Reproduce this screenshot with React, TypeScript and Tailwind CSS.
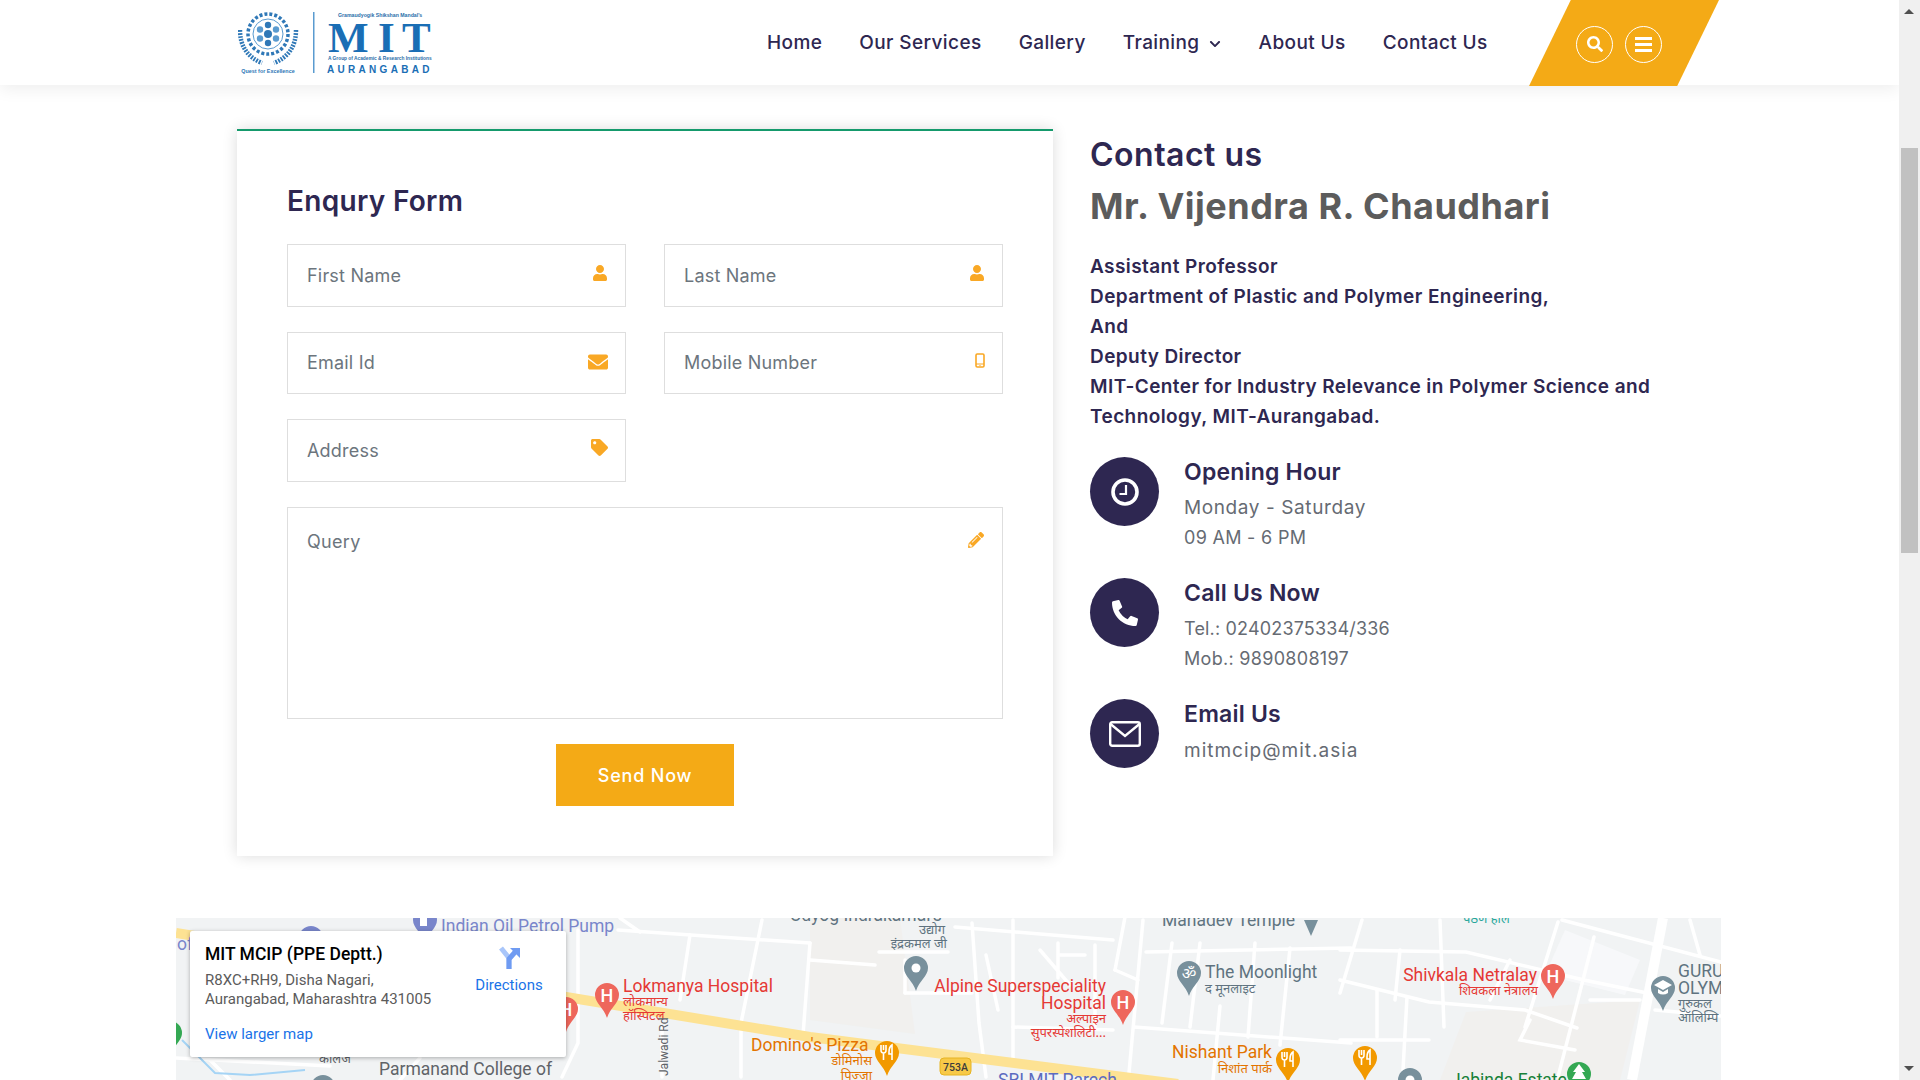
import React from "react";
import { FaUser, FaEnvelope, FaTag, FaPencilAlt, FaSearch, FaChevronDown, FaPhoneAlt } from "react-icons/fa";

function Logo() {
  return (
    <svg width="200" height="85" viewBox="238 0 200 85" className="shrink-0">
      <g transform="translate(268,34)">
        <circle r="20" fill="none" stroke="#2f78b7" strokeWidth="3.500" strokeDasharray="3 2" />
        <circle r="15" fill="none" stroke="#5a9bd0" strokeWidth="1" />
        <circle r="4" fill="#2f78b7" />
        <circle cx="0" cy="-9" r="3.200" fill="#2f78b7" />
        <circle cx="0" cy="9" r="3.200" fill="#2f78b7" />
        <circle cx="-8" cy="-4.500" r="3.200" fill="#5a9bd0" />
        <circle cx="8" cy="-4.500" r="3.200" fill="#5a9bd0" />
        <circle cx="-8" cy="4.500" r="3.200" fill="#5a9bd0" />
        <circle cx="8" cy="4.500" r="3.200" fill="#5a9bd0" />
        <path d="M-28 -4 Q-28 20 -6 29" fill="none" stroke="#2f78b7" strokeWidth="4.500" strokeDasharray="1.800 1.200" />
        <path d="M28 -4 Q28 20 6 29" fill="none" stroke="#2f78b7" strokeWidth="4.500" strokeDasharray="1.800 1.200" />
      </g>
      <text x="268" y="73" textAnchor="middle" fontSize="5.400" fontWeight="700" fill="#2f78b7" fontFamily="Liberation Sans, sans-serif">Quest for Excellence</text>
      <rect x="313" y="12" width="1.500" height="61" fill="#5a9bd0" />
      <text x="338" y="16.500" fontSize="5.200" fontWeight="700" fill="#2a6ea9" fontFamily="Liberation Sans, sans-serif">Gramaudyogik Shikshan Mandal's</text>
      <text x="328 378 402" y="52" fontSize="43" fontWeight="700" fill="#1a6eb5" fontFamily="Liberation Serif, serif">MIT</text>
      <text x="328" y="60" fontSize="4.800" fontWeight="700" fill="#2a6ea9" fontFamily="Liberation Sans, sans-serif">A Group of Academic &amp; Research Institutions</text>
      <text x="327" y="73" fontSize="10" fontWeight="700" fill="#1a6eb5" fontFamily="Liberation Sans, sans-serif" letterSpacing="3.300">AURANGABAD</text>
    </svg>
  );
}

function NavLink({ children }: { children: React.ReactNode }) {
  return <a className="text-[19px] font-medium text-[#2e2751] tracking-[0.4px] whitespace-nowrap">{children}</a>;
}

function Header() {
  return (
    <header className="relative z-10 h-[85px] bg-white flex items-center pl-[238px] pr-[180px] shadow-[0_4px_16px_rgba(0,0,0,0.07)]">
      <Logo />
      <nav className="flex items-center gap-[37px] ml-[329px] pt-[2px]">
        <NavLink>Home</NavLink>
        <NavLink>Our Services</NavLink>
        <NavLink>Gallery</NavLink>
        <span className="flex items-center gap-[9px]">
          <NavLink>Training</NavLink>
          <FaChevronDown className="text-[#2e2751] text-[12px]" />
        </span>
        <span className="ml-[1px]"><NavLink>About Us</NavLink></span>
        <NavLink>Contact Us</NavLink>
      </nav>
      <div className="ml-auto self-start h-[86px] w-[190px] bg-[#f4aa16] flex items-center justify-center gap-[12px] pr-[10px] pt-[2px] [clip-path:polygon(22%_0,100%_0,78%_100%,0_100%)]">
        <span className="w-[37px] h-[37px] rounded-full border border-white flex items-center justify-center text-white text-[16px]"><FaSearch /></span>
        <span className="w-[37px] h-[37px] rounded-full border border-white flex flex-col items-center justify-center gap-[3px]">
          <i className="block w-[17px] h-[3px] bg-white" />
          <i className="block w-[17px] h-[3px] bg-white" />
          <i className="block w-[17px] h-[3px] bg-white" />
        </span>
      </div>
    </header>
  );
}

function Mobile() {
  return (
    <svg width="10" height="15" viewBox="0 0 10 15">
      <rect x="1" y="1" width="8" height="13" rx="1.200" fill="none" stroke="#f9a825" strokeWidth="1.600" />
      <rect x="1" y="10.500" width="8" height="1" fill="#f9a825" />
      <circle cx="5" cy="12.600" r="0.700" fill="#f9a825" />
    </svg>
  );
}

function Field({ label, icon }: { label: string; icon: React.ReactNode }) {
  return (
    <div className="relative border border-[#dedede] bg-white h-[62.5px]">
      <input placeholder={label} className="w-full h-full pl-[19px] pr-12 text-[18px] tracking-[0.2px] outline-none bg-transparent placeholder:text-[#6c757d] text-[#6c757d]" />
      <span className="absolute right-[17px] top-[20px] text-[#f9a825] text-[16px] leading-none">{icon}</span>
    </div>
  );
}

function EnquiryForm() {
  return (
    <section className="w-[816px] h-[727px] shrink-0 bg-white border-t-2 border-[#159a6c] shadow-[0_0_14px_rgba(0,0,0,0.14)] px-[50px] pt-[52px]">
      <h2 className="text-[28px] leading-[36px] font-semibold text-[#2e2751] tracking-[0.3px]">Enqury Form</h2>
      <div className="mt-[25px] grid grid-cols-2 gap-x-[38px] gap-y-[25px]">
        <Field label="First Name" icon={<FaUser className="text-[16px]" />} />
        <Field label="Last Name" icon={<FaUser className="text-[16px]" />} />
        <Field label="Email Id" icon={<FaEnvelope className="text-[20px] -mt-[1px]" />} />
        <Field label="Mobile Number" icon={<Mobile />} />
        <Field label="Address" icon={<FaTag className="text-[17px] -mt-[1px]" />} />
        <div />
        <div className="col-span-2 relative border border-[#dedede] h-[212px]">
          <textarea placeholder="Query" className="w-full h-full pl-[19px] pt-[20px] text-[18px] tracking-[0.3px] resize-none outline-none placeholder:text-[#6c757d]" />
          <span className="absolute right-[18px] top-[24px] text-[#f9a825] text-[16px] leading-none"><FaPencilAlt /></span>
        </div>
      </div>
      <div className="flex justify-center mt-[25.5px]">
        <button className="w-[178px] h-[62px] bg-[#f4aa16] text-white text-[18px] font-medium tracking-[0.8px]">Send Now</button>
      </div>
    </section>
  );
}

function InfoItem({ icon, title, lines, sub }: { icon: React.ReactNode; title: string; lines: { t: string; c: string }[]; sub: string }) {
  return (
    <div className="flex gap-[25px] h-[94px]">
      <div className="w-[69px] h-[69px] rounded-full bg-[#2e2751] flex items-center justify-center text-white shrink-0">{icon}</div>
      <div>
        <h4 className="text-[23px] leading-[30px] font-semibold text-[#2e2751] tracking-[0.2px]">{title}</h4>
        <div className={sub}>
          {lines.map((l) => (
            <p key={l.t} className={"leading-[30px] text-[#666b73] whitespace-nowrap " + l.c}>{l.t}</p>
          ))}
        </div>
      </div>
    </div>
  );
}

function Contact() {
  return (
    <aside className="ml-[37px] mt-[0.5px] w-[590px]">
      <h3 className="text-[32px] leading-[50px] font-semibold text-[#2e2751] tracking-[0.5px]">Contact us</h3>
      <h2 className="text-[36px] leading-[54px] font-bold text-[#5c5c5c] -mt-[0.5px] whitespace-nowrap tracking-[0.5px]">Mr. Vijendra R. Chaudhari</h2>
      <p className="mt-[19px] text-[19px] leading-[30px] font-semibold text-[#2e2751] tracking-[0.42px] whitespace-nowrap">
        Assistant Professor<br />
        Department of Plastic and Polymer Engineering,<br />
        And<br />
        Deputy Director<br />
        MIT-Center for Industry Relevance in Polymer Science and<br />
        Technology, MIT-Aurangabad.
      </p>
      <div className="mt-[25px] flex flex-col gap-[27px]">
        <InfoItem
          title="Opening Hour"
          sub="mt-[6px]"
          lines={[
            { t: "Monday - Saturday", c: "text-[19px] tracking-[0.6px]" },
            { t: "09 AM - 6 PM", c: "text-[18px] tracking-[0.3px]" },
          ]}
          icon={
            <svg width="28" height="28" viewBox="0 0 28 28" fill="none" stroke="white">
              <circle cx="14" cy="14" r="12" strokeWidth="3.600" />
              <path d="M15 7v9H8.500" strokeWidth="2.200" />
            </svg>
          }
        />
        <InfoItem
          title="Call Us Now"
          sub="mt-[6px]"
          lines={[
            { t: "Tel.: 02402375334/336", c: "text-[18px] tracking-[0.17px]" },
            { t: "Mob.: 9890808197", c: "text-[18px] tracking-[0.3px]" },
          ]}
          icon={<FaPhoneAlt className="text-[26px]" />}
        />
        <InfoItem
          title="Email Us"
          sub="mt-[7px]"
          lines={[{ t: "mitmcip@mit.asia", c: "text-[19px] tracking-[1px]" }]}
          icon={
            <svg width="32" height="26" viewBox="0 0 32 26" fill="none" stroke="white" strokeWidth="2.400">
              <rect x="1.200" y="1.200" width="29.600" height="23.600" rx="2" />
              <path d="M1.500 3 16 15 30.500 3" />
            </svg>
          }
        />
      </div>
    </aside>
  );
}

const deva = "Noto Sans, Roboto, sans-serif";

function Pin({ x, y, c, children }: { x: number; y: number; c: string; children?: React.ReactNode }) {
  return (
    <g transform={`translate(${x},${y})`}>
      <path d="M-12 0A12 12 0 1 1 12 0C12 8 3 13 0 23C-3 13 -12 8 -12 0Z" fill={c} />
      {children}
    </g>
  );
}
const H = () => <text x="0" y="6.500" textAnchor="middle" fontSize="18" fontWeight="500" fill="white" fontFamily="Roboto, sans-serif">H</text>;
const Fork = () => <path d="M-6 -8v5q0 3 2.500 3v7M-3.500 -8v5M-1 -8v5q0 3 -2.500 3M5 7v-15q-3 2 -3 7v2h3" fill="none" stroke="white" strokeWidth="1.600" />;
const Dot = () => <circle r="4.500" fill="white" />;

const roads: string[] = [
  "M972 923L979 1023L986 1077", "M1013 920V1063", "M955 927L1113 940", "M1115 970L1138 980", "M1143 920L1129 1073",
  "M1134 1027L1351 1043", "M1146 952L1351 948", "M1172 943L1162 1023", "M1200 943L1190 1027", "M1255 943L1248 1037",
  "M1220 1006L1213 1080", "M879 952H948", "M905 993H972", "M905 960V993", "M1013 1027L1113 1030", "M1058 943V978", "M986 955L998 1010",
  "M1060 955H1085", "M1040 950L1070 985", "M1125 917L1115 970", "M1095 945V1027",
  "M1362 920L1340 993", "M1340 980L1429 1002L1525 1010L1577 1028", "M1340 950L1466 952L1584 980L1647 993",
  "M1340 1040H1429", "M1377 990V1037", "M1407 997L1403 1070", "M1440 920L1444 1027", "M1558 922L1525 1027", "M1562 920L1721 962",
  "M1594 937L1558 1077", "M1290 948L1280 1045", "M1400 950L1395 1000", "M1510 960L1490 1000", "M1530 1020L1520 1040L1575 1050",
  "M1590 1000H1640", "M1690 920L1700 955", "M1655 1010L1721 1016",
  "M762 920L741 1023V1077", "M618 930L810 943", "M662 1027V1077", "M578 930V1043L562 1077", "M690 935L680 1000", "M810 943L803 1035",
  "M620 918L640 932", "M810 960L875 965", "M176 1058L330 1066", "M420 1058L400 1080", "M210 1060L230 1080",
];

function MapSvg() {
  return (
    <svg viewBox="176 918 1545 162" width="1545" height="162" className="block absolute left-0 top-0">
      <rect x="176" y="918" width="1545" height="162" fill="#f1f3f4" />
      <path d="M1466 1012L1640 1000L1620 1080H1440Z" fill="#f1f0ee" />
      <path d="M810 918H900L915 1034L810 1020Z" fill="#f1f0ee" />
      <path d="M1565 930L1640 960L1625 995L1545 975Z" fill="#f7f8fa" />
      <g stroke="#ffffff" strokeWidth="3.500" fill="none" strokeLinecap="round">
        {roads.map((d) => <path key={d} d={d} />)}
      </g>
      <path d="M1663 918L1632 1080" stroke="#ffffff" strokeWidth="10" fill="none" />
      <path d="M176 933L566 997L810 1037L1178 1084" stroke="#fde293" strokeWidth="10" fill="none" />
      <path d="M182 1040L215 1073L250 1075L305 1070" fill="none" stroke="#a5d4f5" strokeWidth="2" />

      <g fontFamily="Roboto, sans-serif" fontSize="17.500">
        <text x="441" y="932" fill="#7986cb">Indian Oil Petrol Pump</text>
        <text x="177" y="950" fill="#7986cb">of</text>
        <text x="623" y="992" fill="#e53935">Lokmanya Hospital</text>
        <text x="623" y="1006" fill="#e53935" fontSize="13" fontFamily={deva}>लोकमान्य</text>
        <text x="623" y="1020" fill="#e53935" fontSize="13" fontFamily={deva}>हॉस्पिटल</text>
        <text x="751" y="1051" fill="#e37400">Domino's Pizza</text>
        <text x="872" y="1065" fill="#e37400" fontSize="13" textAnchor="end" fontFamily={deva}>डोमिनोस</text>
        <text x="872" y="1080" fill="#e37400" fontSize="13" textAnchor="end" fontFamily={deva}>पिज़्ज़ा</text>
        <text x="1106" y="992" fill="#e53935" textAnchor="end">Alpine Superspeciality</text>
        <text x="1106" y="1009" fill="#e53935" textAnchor="end">Hospital</text>
        <text x="1106" y="1023" fill="#e53935" fontSize="13" textAnchor="end" fontFamily={deva}>अल्पाइन</text>
        <text x="1106" y="1037" fill="#e53935" fontSize="13" textAnchor="end" fontFamily={deva}>सुपरस्पेशलिटी...</text>
        <text x="1205" y="978" fill="#5f7380">The Moonlight</text>
        <text x="1205" y="993" fill="#5f7380" fontSize="13" fontFamily={deva}>द मूनलाइट</text>
        <text x="1272" y="1058" fill="#e37400" textAnchor="end">Nishant Park</text>
        <text x="1272" y="1073" fill="#e37400" fontSize="13" textAnchor="end" fontFamily={deva}>निशांत पार्क</text>
        <text x="1537" y="981" fill="#e53935" textAnchor="end">Shivkala Netralay</text>
        <text x="1538" y="995" fill="#e53935" fontSize="13" textAnchor="end" fontFamily={deva}>शिवकला नेत्रालय</text>
        <text x="1678" y="977" fill="#5f7380">GURU</text>
        <text x="1678" y="994" fill="#5f7380">OLYM</text>
        <text x="1678" y="1008" fill="#5f7380" fontSize="13" fontFamily={deva}>गुरुकल</text>
        <text x="1678" y="1022" fill="#5f7380" fontSize="13" fontFamily={deva}>ऑलिम्पि</text>
        <text x="379" y="1075" fill="#5f6368">Parmanand College of</text>
        <text x="319" y="1063" fill="#5f6368" fontSize="13" fontFamily={deva}>कॉलेज</text>
        <text x="1451" y="1086" fill="#188038">Jabinda Estate</text>
        <text x="998" y="1086" fill="#5c6bc0">SRI MIT Parech</text>
        <text x="1162" y="926" fill="#5f7380">Mahadev Temple</text>
        <text x="790" y="921" fill="#5f7380">Udyog Indrakamal's</text>
        <text x="945" y="934" fill="#5f7380" fontSize="13" textAnchor="end" fontFamily={deva}>उद्योग</text>
        <text x="947" y="948" fill="#5f7380" fontSize="13" textAnchor="end" fontFamily={deva}>इंद्रकमल जी</text>
        <text x="1463" y="923" fill="#26a69a" fontSize="13" fontFamily={deva}>पैठण हॉल</text>
        <text x="668" y="1076" fill="#5f6368" fontSize="12" transform="rotate(-90 668 1076)">Jalwadi Rd</text>
      </g>

      <path d="M1304 920H1318L1311 936Z" fill="#78909c" />
      <Pin x={425} y={920} c="#7986cb"><rect x="-5" y="-6" width="7" height="12" fill="white" /></Pin>
      <Pin x={311} y={938} c="#7986cb" />
      <Pin x={916} y={968} c="#78909c"><Dot /></Pin>
      <Pin x={1123} y={1002} c="#ee675c"><H /></Pin>
      <Pin x={1189} y={973} c="#78909c"><text y="6" textAnchor="middle" fontSize="16" fill="white" fontFamily={deva}>ॐ</text></Pin>
      <Pin x={887} y={1053} c="#f29900"><Fork /></Pin>
      <Pin x={1288} y={1060} c="#f29900"><Fork /></Pin>
      <Pin x={1365} y={1058} c="#f29900"><Fork /></Pin>
      <Pin x={1410} y={1080} c="#78909c"><Dot /></Pin>
      <Pin x={1579} y={1074} c="#34a853"><path d="M0 -10L6 -2H3L7 5H-7L-3 -2H-6Z" fill="white" /></Pin>
      <Pin x={1553} y={976} c="#ee675c"><H /></Pin>
      <Pin x={1663} y={988} c="#78909c"><path d="M-9 -3L0 -8L9 -3L0 2Z M-5 1V5Q0 8 5 5V1L0 4Z" fill="white" /></Pin>
      <Pin x={607} y={995} c="#ee675c"><H /></Pin>
      <Pin x={566} y={1009} c="#ee675c"><H /></Pin>
      <Pin x={170} y={1033} c="#34a853" />
      <Pin x={323} y={1087} c="#78909c"><Dot /></Pin>

      <rect x="940" y="1058" width="31" height="17" rx="4" fill="#f7c948" stroke="#e6b422" />
      <text x="955.500" y="1070.500" textAnchor="middle" fontSize="10.500" fontWeight="500" fill="#3c3c3c" fontFamily="Roboto, sans-serif">753A</text>
    </svg>
  );
}

function MapSection() {
  return (
    <div className="relative ml-[176px] mt-[62px] w-[1545px] h-[162px] overflow-hidden" style={{ fontFamily: "Roboto, sans-serif" }}>
      <MapSvg />
      <div className="absolute left-[14px] top-[13px] w-[376px] h-[126px] bg-white rounded-[2px] shadow-[0_1px_4px_rgba(0,0,0,0.3)] pl-[15px] pt-[11px]">
        <div className="flex">
          <div className="w-[264px]">
            <div className="text-[17.500px] leading-[24px] font-medium text-black whitespace-nowrap">MIT MCIP (PPE Deptt.)</div>
            <div className="mt-[5px] text-[15px] leading-[18.500px] text-[#5b5b5b] whitespace-nowrap">R8XC+RH9, Disha Nagari,<br />Aurangabad, Maharashtra 431005</div>
          </div>
          <div className="w-[80px] flex flex-col items-center text-[15px] text-[#1a73e8]">
            <svg width="24" height="24" viewBox="0 0 24 24" className="mt-[4px]">
              <path d="M12 23V12L4 2" stroke="#a9c6fa" strokeWidth="5" fill="none" />
              <path d="M12 23V13L19 5" stroke="#6f9bf2" strokeWidth="5" fill="none" />
              <path d="M13 2H23V12Z" fill="#6f9bf2" />
            </svg>
            <span className="mt-[4px]">Directions</span>
          </div>
        </div>
        <div className="mt-[15px] text-[15px] text-[#1a73e8]">View larger map</div>
      </div>
    </div>
  );
}

function Scrollbar() {
  return (
    <div className="w-[21px] shrink-0 h-full bg-[#f0f0f0] relative">
      <span className="absolute left-[5px] top-[9px] w-0 h-0 border-x-[5px] border-x-transparent border-b-[5px] border-b-[#505050]" />
      <span className="absolute left-[2px] right-[2px] top-[148px] h-[405px] bg-[#c1c1c1]" />
      <span className="absolute left-[5px] bottom-[9px] w-0 h-0 border-x-[5px] border-x-transparent border-t-[5px] border-t-[#505050]" />
    </div>
  );
}

export default function App() {
  return (
    <div className="h-screen w-screen flex overflow-hidden bg-white" style={{ fontFamily: "Inter, sans-serif" }}>
      <div className="flex-1 min-w-0 h-full overflow-hidden">
        <Header />
        <main className="flex pl-[237px] pt-[44px]">
          <EnquiryForm />
          <Contact />
        </main>
        <MapSection />
      </div>
      <Scrollbar />
    </div>
  );
}
